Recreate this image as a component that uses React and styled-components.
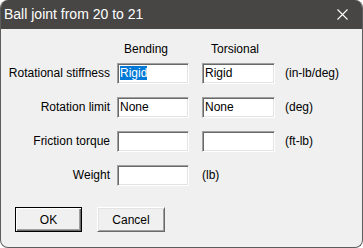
import React from 'react';
import styled, { createGlobalStyle } from 'styled-components';

/* CSS---------------------------------------------------------------------*/
const GlobalStyle = createGlobalStyle`
  html, body {
    margin: 0;
    padding: 0;
    background: #ffffff;
  }
`;

// Outer dialog frame with rounded corners
const Window = styled.div`
  width: 363px;
  height: 248px;
  box-sizing: border-box;
  border: 1px solid #5c5c5c;
  border-top: 0;
  border-radius: 8px;
  overflow: hidden;
  background: #f0f0f0;
  display: flex;
  flex-direction: column;
  font-family: "Liberation Sans", Arial, sans-serif;
  font-size: 12px;
  color: #000000;
`;

const TitleBar = styled.div`
  height: 29px;
  flex: none;
  background: #474645;
  display: flex;
  align-items: center;
  justify-content: space-between;
  padding: 0 14px 0 3px;
`;

const Title = styled.div`
  color: #ffffff;
  font-size: 14px;
  line-height: 16px;
  margin-top: -1px;
`;

const Body = styled.div`
  flex: 1;
  padding: 13px 0 0 0;
  display: flex;
  flex-direction: column;
`;

// Four column grid shared by heading row and field rows
const Grid = styled.div`
  display: grid;
  grid-template-columns: 116px 85px 83px auto;
  grid-auto-rows: 21px;
  row-gap: 13px;
`;

const Headings = styled.div`
  display: grid;
  grid-template-columns: 116px 85px 83px auto;
  height: 14px;
  line-height: 14px;
  margin-bottom: 7px;
`;

const Heading = styled.div`
  grid-column: ${props => props.col};
  padding-left: ${props => props.indent}px;
`;

const Label = styled.div`
  text-align: right;
  padding-right: 7px;
  line-height: 21px;
  white-space: nowrap;
`;

const Unit = styled.div`
  grid-column: ${props => props.col || 4};
  line-height: 21px;
  white-space: nowrap;
`;

// Sunken edit box
const Field = styled.div`
  width: ${props => props.w}px;
  height: 21px;
  box-sizing: border-box;
  background: #ffffff;
  border: 1px solid;
  border-color: #a0a0a0 #ffffff #ffffff #a0a0a0;
  box-shadow: inset 1px 1px 0 #696969, inset -1px -1px 0 #e3e3e3;
  padding-left: 2px;
  line-height: 19px;
  white-space: nowrap;
  overflow: hidden;
`;

const Selected = styled.span`
  background: #0078d7;
  color: #ffffff;
`;

const Buttons = styled.div`
  display: flex;
  gap: 15px;
  padding-left: 14px;
  margin-top: 21px;
`;

const Button = styled.button`
  width: ${props => props.w}px;
  height: 25px;
  box-sizing: border-box;
  padding: 0;
  font-family: "Liberation Sans", Arial, sans-serif;
  font-size: 12px;
  color: #000000;
  background: #f0f0f0;
  border: 1px solid;
  border-color: ${props => props.primary
    ? '#000000'
    : '#ffffff #696969 #696969 #ffffff'};
  box-shadow: ${props => props.primary
    ? 'inset 1px 1px 0 #ffffff, inset -1px -1px 0 #696969, inset -2px -2px 0 #a0a0a0'
    : 'inset 1px 1px 0 #e3e3e3, inset -1px -1px 0 #a0a0a0'};
`;
/*-------------------------------------------------------------------------*/

/* Data--------------------------------------------------------------------*/
const rows = [
  { label: 'Rotational stiffness', bending: 'Rigid', torsional: 'Rigid', unit: '(in-lb/deg)', selected: true },
  { label: 'Rotation limit', bending: 'None', torsional: 'None', unit: '(deg)' },
  { label: 'Friction torque', bending: '', torsional: '', unit: '(ft-lb)' },
  { label: 'Weight', bending: '', unit: '(lb)' },
];
/*-------------------------------------------------------------------------*/

/* Functions---------------------------------------------------------------*/
const CloseIcon = () => (
  <svg width="11" height="11" viewBox="0 0 11 11">
    <path d="M0.5 0.5 L10.5 10.5 M10.5 0.5 L0.5 10.5" stroke="#ffffff" strokeWidth="1.1" fill="none" />
  </svg>
);

const FieldRow = ({ label, bending, torsional, unit, selected }) => (
  <>
    <Label>{label}</Label>
    <Field w={72}>{selected ? <Selected>{bending}</Selected> : bending}</Field>
    {torsional !== undefined && <Field w={73}>{torsional}</Field>}
    <Unit col={torsional !== undefined ? 4 : 3}>{unit}</Unit>
  </>
);
/*-------------------------------------------------------------------------*/

/* Render------------------------------------------------------------------*/
const App = () => (
  <>
    <GlobalStyle />
    <Window>
      <TitleBar>
        <Title>Ball joint from 20 to 21</Title>
        <CloseIcon />
      </TitleBar>
      <Body>
        <Headings>
          <Heading col={2} indent={7}>Bending</Heading>
          <Heading col={3} indent={9}>Torsional</Heading>
        </Headings>
        <Grid>
          {rows.map(row => <FieldRow key={row.label} {...row} />)}
        </Grid>
        <Buttons>
          <Button primary w={67}>OK</Button>
          <Button w={68}>Cancel</Button>
        </Buttons>
      </Body>
    </Window>
  </>
);
/*-------------------------------------------------------------------------*/

export default App;
